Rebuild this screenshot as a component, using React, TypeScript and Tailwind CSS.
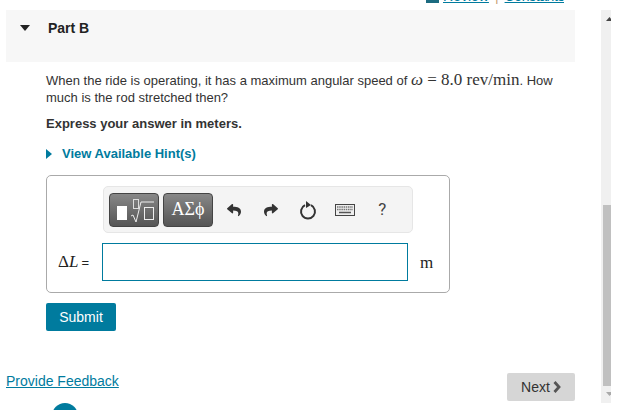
import React from 'react';
import { FaReply, FaShare } from 'react-icons/fa';

const tool = 'w-[37.2px] flex justify-center items-center';

const App: React.FC = () => {
    return (
        <div className="w-[625px] h-[410px] bg-white overflow-hidden flex font-['Liberation_Sans',Arial,sans-serif] text-[#333]">
            <div className="w-[569px] ml-[6px] shrink-0">
                {/* links clipped by the top edge */}
                <div className="h-[10px] overflow-hidden relative">
                    <div className="absolute right-[11px] bottom-[6px] flex items-end gap-[6px] text-[14px] leading-[16px] text-[#007b9e]">
                        <span className="w-[13px] h-[3px] mb-[1px] bg-[#1c6b80]"></span>
                        <span className="underline -ml-[2px]">Review</span>
                        <span className="text-[#c9a27a]">|</span>
                        <span className="underline tracking-[-0.4px]">Constants</span>
                    </div>
                </div>

                <div className="h-[52px] bg-[#f7f7f7] flex items-start pt-[10px]">
                    <svg width="10" height="6" viewBox="0 0 10 6" className="ml-[14px] mt-[5px]">
                        <polygon points="0,0 10,0 5,6" fill="#222" />
                    </svg>
                    <span className="ml-[18px] text-[14px] leading-[16px] font-bold text-[#222]">Part B</span>
                </div>

                <div className="pl-[40px]">
                    <p className="mt-[9px] text-[13px] leading-[17px] w-[520px]">
                        When the ride is operating, it has a maximum angular speed of{' '}
                        <span className="font-['Liberation_Serif',serif] text-[17px] leading-[17px] text-[#333]">
                            <i>ω</i> = 8.0 rev/min
                        </span>
                        . How much is the rod stretched then?
                    </p>
                    <p className="mt-[9px] text-[13px] leading-[17px] font-bold">Express your answer in meters.</p>
                    <div className="mt-[14px] flex items-center text-[#007b9e] text-[13px] leading-[16px] font-bold">
                        <svg width="6" height="10" viewBox="0 0 6 10">
                            <polygon points="0,0 6,5 0,10" fill="#007b9e" />
                        </svg>
                        <span className="ml-[10px]">View Available Hint(s)</span>
                    </div>

                    <div className="mt-[13px] w-[404px] h-[118px] border border-[#aaa] rounded-[5px] flex flex-col">
                        <div className="ml-[56px] mt-[10px] w-[310px] h-[47px] bg-[#f4f4f4] border border-[#e6e6e6] rounded-[5px] flex items-center pl-[5px]">
                            <div className="w-[50px] h-[34px] rounded-[4px] border border-[#444] bg-gradient-to-b from-[#888] to-[#555] flex items-center justify-center">
                                <svg width="42" height="28" viewBox="0 0 42 28" fill="none">
                                    <rect x="4" y="10" width="10" height="14" fill="#fff" />
                                    <rect x="20.5" y="3.5" width="5" height="9" stroke="#ddd" />
                                    <path d="M18 20l2 -1 3 7 5 -20h13" stroke="#eee" strokeWidth="1" />
                                    <rect x="31.5" y="11.5" width="9" height="12" stroke="#eee" />
                                </svg>
                            </div>
                            <div className="ml-[4px] w-[50px] h-[34px] rounded-[4px] border border-[#444] bg-gradient-to-b from-[#888] to-[#555] flex items-center justify-center text-white text-[18px] font-['Liberation_Serif',serif]">
                                ΑΣϕ
                            </div>
                            <div className="ml-[2px] flex text-[#333]">
                                <div className={tool}>
                                    <FaReply size={14} />
                                </div>
                                <div className={tool}>
                                    <FaShare size={14} />
                                </div>
                                <div className={tool}>
                                    <svg width="18" height="20" viewBox="0 0 18 20" fill="none">
                                        <path d="M6 5.2a7 7 0 1 0 6 0" stroke="#333" strokeWidth="2" />
                                        <polygon points="7,1 12,5 7,8" fill="#333" />
                                    </svg>
                                </div>
                                <div className={tool}>
                                    <svg width="20" height="12" viewBox="0 0 20 12">
                                        <rect x="0.5" y="0.5" width="19" height="11" fill="#eee" stroke="#444" />
                                        <path d="M2 3h16M2 5.5h16" stroke="#777" strokeWidth="1.4" strokeDasharray="1.5 0.7" />
                                        <path d="M4 8.5h12" stroke="#555" strokeWidth="1.5" />
                                    </svg>
                                </div>
                                <div className={`${tool} text-[17px] font-['Roboto',sans-serif] text-[#444]`}>?</div>
                            </div>
                        </div>

                        <div className="mt-[10px] flex items-center">
                            <span className="ml-[11px] w-[44px] text-[17px] text-[#222] font-['Liberation_Serif',serif] whitespace-nowrap">
                                Δ<i>L</i>
                                <span className="ml-[3px] text-[13px] font-['Liberation_Sans',sans-serif]">=</span>
                            </span>
                            <div className="w-[306px] h-[38px] border border-[#007b9e] bg-white"></div>
                            <span className="ml-[12px] text-[17px] leading-[17px] font-['Liberation_Serif',serif] text-[#222]">m</span>
                        </div>
                    </div>

                    <button className="mt-[10px] block w-[70px] h-[28px] rounded-[2px] bg-[#007b9e] text-white text-[14px]">Submit</button>
                </div>

                <div className="mt-[29px] flex items-start justify-between">
                    <a className="text-[14px] leading-[17px] text-[#007b9e] underline mt-[13px]">Provide Feedback</a>
                    <button className="w-[68px] h-[28px] rounded-[2px] bg-[#d6d6d6] text-[14px] text-[#333] flex items-center justify-center gap-[3px] mt-[13px]">
                        Next
                        <svg width="8" height="12" viewBox="0 0 8 12">
                            <path d="M1.5 1l4.5 5-4.5 5" fill="none" stroke="#555" strokeWidth="2.8" />
                        </svg>
                    </button>
                </div>
                <div className="ml-[46px] mt-[2px] w-[26px] h-[26px] rounded-full bg-[#007b9e]"></div>
            </div>

            {/* scrollbar */}
            <div className="ml-[26px] mt-[10px] w-[10px] h-[393px] bg-[#f0f0f0] flex flex-col items-end relative overflow-hidden">
                <svg width="7" height="4" viewBox="0 0 7 4" className="absolute left-[5px] top-[7px]">
                    <polygon points="0,4 7,4 3.5,0" fill="#444" />
                </svg>
                <div className="mt-[195px] w-[8px] h-[181px] bg-[#c0c0c0]"></div>
                <svg width="7" height="4" viewBox="0 0 7 4" className="absolute left-[5px] bottom-[7px]">
                    <polygon points="0,0 7,0 3.5,4" fill="#aaa" />
                </svg>
            </div>
        </div>
    );
};

export default App;
